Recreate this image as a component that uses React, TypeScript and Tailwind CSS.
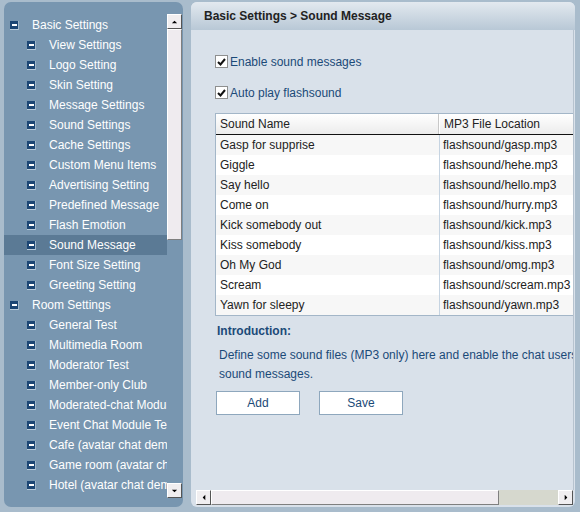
import React from "react";

const basic = [
  "View Settings",
  "Logo Setting",
  "Skin Setting",
  "Message Settings",
  "Sound Settings",
  "Cache Settings",
  "Custom Menu Items",
  "Advertising Setting",
  "Predefined Message",
  "Flash Emotion",
  "Sound Message",
  "Font Size Setting",
  "Greeting Setting",
];
const rooms = [
  "General Test",
  "Multimedia Room",
  "Moderator Test",
  "Member-only Club",
  "Moderated-chat Module",
  "Event Chat Module Test",
  "Cafe (avatar chat demo)",
  "Game room (avatar chat demo)",
  "Hotel (avatar chat demo)",
];
const sounds: [string, string][] = [
  ["Gasp for supprise", "flashsound/gasp.mp3"],
  ["Giggle", "flashsound/hehe.mp3"],
  ["Say hello", "flashsound/hello.mp3"],
  ["Come on", "flashsound/hurry.mp3"],
  ["Kick somebody out", "flashsound/kick.mp3"],
  ["Kiss somebody", "flashsound/kiss.mp3"],
  ["Oh My God", "flashsound/omg.mp3"],
  ["Scream", "flashsound/scream.mp3"],
  ["Yawn for sleepy", "flashsound/yawn.mp3"],
];

function Minus() {
  return (
    <span className="flex h-[9px] w-[9px] shrink-0 items-center justify-center bg-[#1c4674] border-b border-r border-b-[#b9cbda] border-r-[#9fb6c9]">
      <span className="h-[2px] w-[5px] bg-white" />
    </span>
  );
}

function TreeRow({ label, level, selected }: { label: string; level: number; selected?: boolean }) {
  return (
    <div
      className={`flex h-[20px] items-center whitespace-nowrap ${selected ? "bg-[#5b7a95]" : ""} ${
        level === 0 ? "pl-[6px]" : "pl-[23px]"
      }`}
    >
      <Minus />
      <span className="ml-[13px] text-[12px] text-white leading-none">{label}</span>
    </div>
  );
}

function Arrow({ dir }: { dir: "up" | "down" | "left" | "right" }) {
  const pts =
    dir === "up"
      ? "1,5 5,1 9,5"
      : dir === "down"
      ? "1,1 5,5 9,1"
      : dir === "left"
      ? "5,1 1,5 5,9"
      : "1,1 5,5 1,9";
  const vb = dir === "up" || dir === "down" ? "0 0 10 6" : "0 0 6 10";
  const w = dir === "up" || dir === "down" ? 7 : 4;
  const h = dir === "up" || dir === "down" ? 4 : 7;
  return (
    <svg width={w} height={h} viewBox={vb}>
      <polygon points={pts} fill="#000" />
    </svg>
  );
}

function SBtn({ dir }: { dir: "up" | "down" | "left" | "right" }) {
  return (
    <div className="flex h-[15px] w-[15px] shrink-0 items-center justify-center bg-[#f0eef0] border border-t-white border-l-white border-b-[#555] border-r-[#555]">
      <Arrow dir={dir} />
    </div>
  );
}

function Check() {
  return (
    <span className="flex h-[13px] w-[13px] shrink-0 items-center justify-center border border-[#8e8f8f] bg-white">
      <svg width="9" height="8" viewBox="0 0 9 8">
        <path d="M1 4 L3.5 6.5 L8 1" stroke="#111" strokeWidth="2" fill="none" />
      </svg>
    </span>
  );
}

export default function App() {
  return (
    <div
      className="flex h-[512px] w-[580px] gap-[8px] overflow-hidden bg-[#a9bccc] pl-[4px] pt-[2px] text-[12px]"
      style={{ fontFamily: '"Liberation Sans", Arial, sans-serif' }}
    >
      {/* Sidebar */}
      <div className="flex h-[505px] w-[179px] shrink-0 overflow-hidden rounded-[7px] bg-[#7896b0]">
        <div className="w-[163px] shrink-0 overflow-hidden pt-[13px]">
          <TreeRow label="Basic Settings" level={0} />
          {basic.map((b) => (
            <TreeRow key={b} label={b} level={1} selected={b === "Sound Message"} />
          ))}
          <TreeRow label="Room Settings" level={0} />
          {rooms.map((r) => (
            <TreeRow key={r} label={r} level={1} />
          ))}
        </div>
        <div className="mt-[12px] flex h-[484px] w-[15px] shrink-0 flex-col">
          <SBtn dir="up" />
          <div className="h-[211px] w-[15px] bg-[#efebef] border border-t-white border-l-white border-b-[#7f7f7f] border-r-[#7f7f7f]" />
          <div className="flex-1" />
          <SBtn dir="down" />
        </div>
      </div>

      {/* Main */}
      <div className="flex h-[505px] w-[384px] shrink-0 flex-col overflow-hidden rounded-[6px] bg-[#d9e1ea]">
        <div className="flex h-[28px] shrink-0 items-center bg-gradient-to-b from-[#e3e9ef] to-[#b8c8d6] pl-[13px] text-[12px] font-bold text-[#222]">
          Basic Settings &gt; Sound Message
        </div>
        <div className="w-[383px] flex-1 overflow-hidden border-r border-r-[#b7c3cf] pl-[24px] pt-[25px]">
          <div className="flex h-[13px] items-center gap-[2px] text-[12px] text-[#1b4a78]">
            <Check />
            <span>Enable sound messages</span>
          </div>
          <div className="mt-[18px] flex h-[13px] items-center gap-[2px] text-[12px] text-[#1b4a78]">
            <Check />
            <span>Auto play flashsound</span>
          </div>

          <div className="mt-[14px] w-[380px] border-l border-t border-b border-[#a3b6c8] bg-white text-[12px] text-[#222]">
            <div className="flex h-[21px] border-b border-b-[#111] bg-gradient-to-b from-white to-[#ececec]">
              <div className="flex w-[223px] shrink-0 items-center pl-[4px] border-r border-r-[#c8c8c8]">Sound Name</div>
              <div className="flex flex-1 items-center pl-[4px] border-l border-l-white">MP3 File Location</div>
            </div>
            {sounds.map(([n, f], i) => (
              <div key={n} className={`flex h-[20px] ${i % 2 === 0 ? "bg-[#f7f7f7]" : "bg-white"}`}>
                <div className="flex w-[224px] shrink-0 items-center pl-[4px] border-r border-r-[#c6d4e2] whitespace-nowrap">{n}</div>
                <div className="flex flex-1 items-center pl-[3px] whitespace-nowrap">{f}</div>
              </div>
            ))}
          </div>

          <div className="mt-[6px] pl-[2px] text-[12px] font-bold text-[#1b4a78]">Introduction:</div>
          <div className="mt-[6px] w-[380px] pl-[4px] text-[12px] leading-[19px] text-[#1b4a78] whitespace-nowrap">
            Define some sound files (MP3 only) here and enable the chat users to send
            <br />
            sound messages.
          </div>
          <div className="mt-[7px] flex gap-[19px] pl-[1px]">
            <button className="flex h-[24px] w-[84px] items-center justify-center border border-[#8ea7bd] bg-white text-[12px] text-[#1b4a78]">
              Add
            </button>
            <button className="flex h-[24px] w-[84px] items-center justify-center border border-[#8ea7bd] bg-white text-[12px] text-[#1b4a78]">
              Save
            </button>
          </div>
        </div>
        <div className="mb-[2px] ml-[5px] flex h-[15px] w-[377px] shrink-0">
          <SBtn dir="left" />
          <div className="h-[15px] w-[288px] bg-[#efebef] border border-t-white border-l-white border-b-[#7f7f7f] border-r-[#7f7f7f]" />
          <div className="flex-1 bg-[#d6d8ce]" />
          <SBtn dir="right" />
        </div>
      </div>
    </div>
  );
}
